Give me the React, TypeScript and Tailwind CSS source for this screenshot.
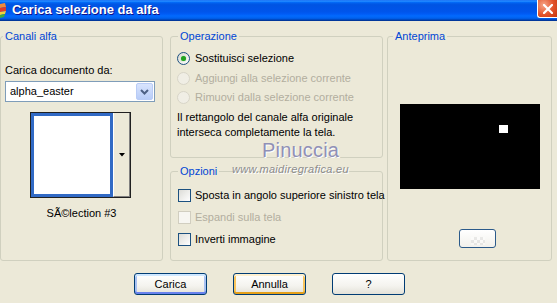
import React from "react";

function Radio({ checked, disabled, label }: { checked?: boolean; disabled?: boolean; label: string }) {
  return (
    <div className="flex items-center h-[13px] leading-[13px]">
      {disabled ? (
        <span className="w-[13px] h-[13px] rounded-full border border-[#D8D5C8] bg-[#F0EEE5] shrink-0" />
      ) : (
        <span className="w-[13px] h-[13px] rounded-full border border-[#1C5180] bg-[linear-gradient(135deg,#D6D6CF,#FFFFFF)] flex items-center justify-center shrink-0">
          {checked && <span className="w-[5px] h-[5px] rounded-full bg-[#21A121] shadow-[0_0_1px_#5FD35F]" />}
        </span>
      )}
      <span className={disabled ? "ml-[5px] text-[#B2AE9F] whitespace-nowrap" : "ml-[5px] whitespace-nowrap"}>{label}</span>
    </div>
  );
}

function Check({ disabled, label }: { disabled?: boolean; label: string }) {
  return (
    <div className="flex items-center h-[13px] leading-[13px]">
      {disabled ? (
        <span className="w-[13px] h-[13px] border border-[#D1CEC0] bg-[#F7F6F1] shrink-0" />
      ) : (
        <span className="w-[13px] h-[13px] border border-[#1C5180] bg-[linear-gradient(135deg,#DCDCD7,#FFFFFF)] shrink-0" />
      )}
      <span className={disabled ? "ml-[4px] text-[#B2AE9F] whitespace-nowrap" : "ml-[4px] whitespace-nowrap"}>{label}</span>
    </div>
  );
}

export default function App() {
  return (
    <div className="relative w-[557px] h-[303px] overflow-hidden bg-[#ECE9D8] font-['Liberation_Sans',Arial,sans-serif] text-[11px] text-black flex flex-col">
      {/* Title bar */}
      <div className="h-[21px] shrink-0 flex items-start bg-[linear-gradient(to_bottom,#0058ee_0%,#3593ff_4%,#288eff_6%,#127dff_8%,#036ffc_10%,#0262ee_14%,#0057e5_20%,#0054e3_24%,#0055eb_56%,#005bf5_66%,#026afe_76%,#0062ef_86%,#0052d6_92%,#0040ab_94%,#003092_100%)]">
        <svg width="7" height="16" viewBox="0 0 7 16" className="mt-[3px] shrink-0">
          <path d="M0 1 L5 0 L6 4 L0 5 Z" fill="#F08A3C" />
          <path d="M0 5 L6 4 L6 8 L0 9 Z" fill="#E23B2A" />
          <path d="M0 9 L6 8 L5 11 L0 12 Z" fill="#F4D23C" />
          <path d="M0 12 L5 11 L4 14 L0 15 Z" fill="#3DAA3D" />
        </svg>
        <span className="ml-[5px] mt-[2px] text-white font-bold text-[13px] leading-[15px] whitespace-nowrap [text-shadow:1px_1px_#0F1089]">
          Carica selezione da alfa
        </span>
        <div className="ml-auto w-[20px] h-[18px] self-start rounded-bl-[3px] border-l border-b border-white bg-[radial-gradient(circle_at_30%_30%,#F6A688,#E2532B_55%,#C5370F)] flex items-center justify-center">
          <svg width="10" height="10" viewBox="0 0 10 10">
            <path d="M1 1 L9 9 M9 1 L1 9" stroke="#FFFFFF" strokeWidth="2.2" strokeLinecap="square" />
          </svg>
        </div>
      </div>

      {/* Groups */}
      <div className="flex pt-[7px] h-[240px] shrink-0">
        {/* Canali alfa */}
        <fieldset className="w-[163px] h-[233px] border border-[#D0D0BF] rounded-[3px] min-w-0">
          <legend className="ml-[2px] px-[2px] leading-[16px] text-[#0046D5]">Canali alfa</legend>
          <div className="ml-[4px] mt-[20px] leading-[13px] whitespace-nowrap">Carica documento da:</div>
          <div className="ml-[4px] mt-[4px] w-[150px] h-[21px] border border-[#7F9DB9] bg-white flex items-center p-[1px]">
            <span className="flex-1 pl-[3px] leading-[13px]">alpha_easter</span>
            <div className="w-[17px] h-[17px] rounded-[2px] border border-[#B9CCF6] bg-[linear-gradient(to_bottom,#D9E4FD,#B8CDF8)] flex items-center justify-center">
              <svg width="9" height="6" viewBox="0 0 9 6">
                <path d="M1 1 L4.5 4.5 L8 1" stroke="#4D6185" strokeWidth="2" fill="none" />
              </svg>
            </div>
          </div>
          <div className="ml-[29px] mt-[10px] w-[101px] h-[86px] border border-[#202020] flex">
            <div className="w-[82px] h-full border-[3px] border-[#316AC5] bg-white" />
            <div className="flex-1 h-full bg-[#ECE9D8] border-l border-white border-r border-b border-r-[#808080] border-b-[#808080] flex items-center justify-center">
              <svg width="6" height="4" viewBox="0 0 6 4">
                <path d="M0 0 L6 0 L3 3.5 Z" fill="#000" />
              </svg>
            </div>
          </div>
          <div className="mt-[8px] text-center leading-[14px]">SÃ©lection #3</div>
        </fieldset>

        {/* Middle column */}
        <div className="ml-[7px] w-[213px] flex flex-col">
          <fieldset className="w-full h-[130px] border border-[#D0D0BF] rounded-[3px] min-w-0">
            <legend className="ml-[7px] px-[2px] leading-[16px] text-[#0046D5]">Operazione</legend>
            <div className="ml-[6px] mt-[8px]">
              <Radio checked label="Sostituisci selezione" />
            </div>
            <div className="ml-[6px] mt-[7px]">
              <Radio disabled label="Aggiungi alla selezione corrente" />
            </div>
            <div className="ml-[6px] mt-[6px]">
              <Radio disabled label="Rimuovi dalla selezione corrente" />
            </div>
            <div className="ml-[6px] mt-[6px] leading-[15px]">
              Il rettangolo del canale alfa originale
              <br />
              interseca completamente la tela.
            </div>
          </fieldset>
          <fieldset className="w-full h-[98px] mt-[5px] border border-[#D0D0BF] rounded-[3px] min-w-0">
            <legend className="ml-[7px] px-[2px] leading-[16px] text-[#0046D5]">Opzioni</legend>
            <div className="ml-[7px] mt-[10px]">
              <Check label="Sposta in angolo superiore sinistro tela" />
            </div>
            <div className="ml-[7px] mt-[9px]">
              <Check disabled label="Espandi sulla tela" />
            </div>
            <div className="ml-[7px] mt-[9px]">
              <Check label="Inverti immagine" />
            </div>
          </fieldset>
        </div>

        {/* Anteprima */}
        <fieldset className="ml-[4px] w-[165px] h-[233px] border border-[#D0D0BF] rounded-[3px] min-w-0">
          <legend className="ml-[5px] px-[2px] leading-[16px] text-[#0046D5]">Anteprima</legend>
          <div className="ml-[12px] mt-[60px] w-[140px] h-[85px] bg-black pl-[99px] pt-[21px]">
            <div className="w-[9px] h-[8px] bg-white" />
          </div>
          <div className="ml-[71px] mt-[40px] w-[37px] h-[19px] rounded-[3px] border border-[#2B5A8A] bg-[linear-gradient(to_bottom,#FFFFFF,#F2F1EC)] flex items-end justify-center pb-[2px]">
            <div className="w-[14px] h-[8px] opacity-40 bg-[conic-gradient(#d0d0d0_25%,#ffffff_0_50%,#d0d0d0_0_75%,#ffffff_0)] bg-[length:6px_6px]" />
          </div>
        </fieldset>
      </div>

      {/* Buttons */}
      <div className="flex pl-[134px] gap-[26px] mt-[12px]">
        <button className="w-[73px] h-[22px] rounded-[3px] border border-[#003C74] bg-[linear-gradient(to_bottom,#FFFFFF,#F4F3EE_60%,#E3E1D8)] shadow-[inset_0_2px_0_#CEE7FF,inset_0_-2px_0_#6982EE,inset_2px_0_0_#A9C2F2,inset_-2px_0_0_#A9C2F2] leading-[13px]">
          Carica
        </button>
        <button className="w-[73px] h-[22px] rounded-[3px] border border-[#003C74] bg-[linear-gradient(to_bottom,#FFFFFF,#F4F3EE_60%,#E3E1D8)] shadow-[inset_0_2px_0_#FFF0CF,inset_0_-2px_0_#E5A01A,inset_2px_0_0_#F8C55E,inset_-2px_0_0_#F8C55E] leading-[13px]">
          Annulla
        </button>
        <button className="w-[73px] h-[22px] rounded-[3px] border border-[#003C74] bg-[linear-gradient(to_bottom,#FFFFFF,#F4F3EE_60%,#E3E1D8)] leading-[13px]">
          ?
        </button>
      </div>

      {/* Watermark */}
      <div className="absolute left-[262px] top-[140px] text-[20px] leading-[20px] text-[#9090B6] tracking-[0.2px] [text-shadow:1px_1px_0_#FFFFFF] pointer-events-none">
        Pinuccia
      </div>
      <div className="absolute left-[232px] top-[163px] text-[11px] leading-[13px] italic text-[#8C8C8C] tracking-[0.3px] [text-shadow:1px_1px_0_#FFFFFF] pointer-events-none whitespace-nowrap">
        www.maidiregrafica.eu
      </div>
    </div>
  );
}
